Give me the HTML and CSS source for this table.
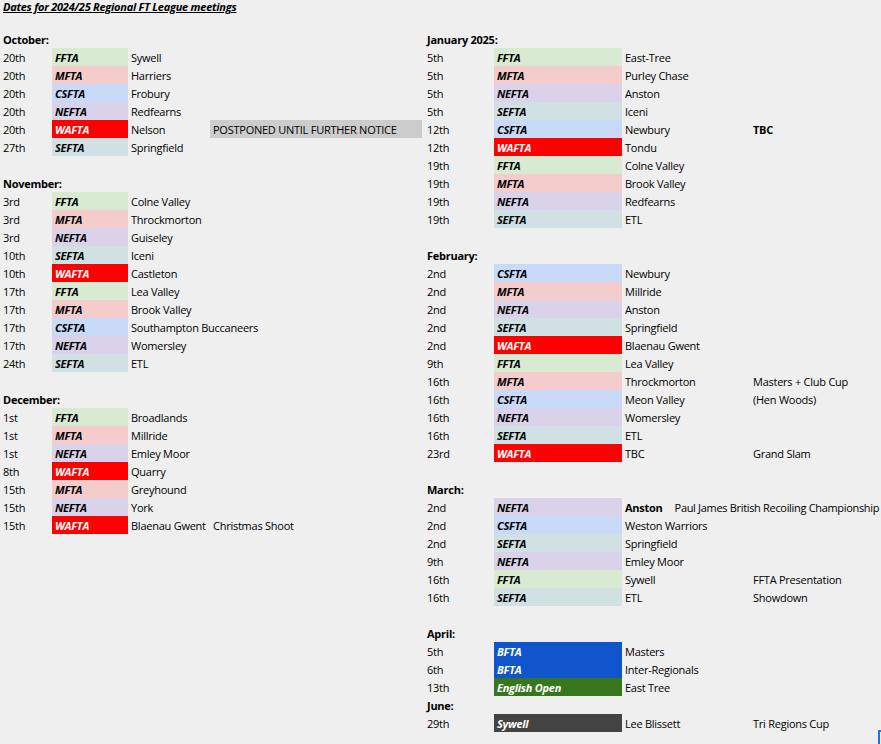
FILE: index.html
```html
<!DOCTYPE html>
<html>
<head>
<meta charset="utf-8">
<link rel="stylesheet" href="styles.css">
</head>
<body>
<div class="sheet">
  <div class="title"><span>Dates for 2024/25 Regional FT League meetings</span></div>
  <div class="col left">
    <div class="row blank"></div>
    <div class="row month">October:</div>
    <div class="row"><span class="d">20th</span><span class="t ffta">FFTA</span><span class="p">Sywell</span></div>
    <div class="row"><span class="d">20th</span><span class="t mfta">MFTA</span><span class="p">Harriers</span></div>
    <div class="row"><span class="d">20th</span><span class="t csfta">CSFTA</span><span class="p">Frobury</span></div>
    <div class="row"><span class="d">20th</span><span class="t nefta">NEFTA</span><span class="p">Redfearns</span></div>
    <div class="row"><span class="d">20th</span><span class="t wafta">WAFTA</span><span class="p">Nelson</span><span class="n postponed">POSTPONED UNTIL FURTHER NOTICE</span></div>
    <div class="row"><span class="d">27th</span><span class="t sefta">SEFTA</span><span class="p">Springfield</span></div>
    <div class="row blank"></div>
    <div class="row month">November:</div>
    <div class="row"><span class="d">3rd</span><span class="t ffta">FFTA</span><span class="p">Colne Valley</span></div>
    <div class="row"><span class="d">3rd</span><span class="t mfta">MFTA</span><span class="p">Throckmorton</span></div>
    <div class="row"><span class="d">3rd</span><span class="t nefta">NEFTA</span><span class="p">Guiseley</span></div>
    <div class="row"><span class="d">10th</span><span class="t sefta">SEFTA</span><span class="p">Iceni</span></div>
    <div class="row"><span class="d">10th</span><span class="t wafta">WAFTA</span><span class="p">Castleton</span></div>
    <div class="row"><span class="d">17th</span><span class="t ffta">FFTA</span><span class="p">Lea Valley</span></div>
    <div class="row"><span class="d">17th</span><span class="t mfta">MFTA</span><span class="p">Brook Valley</span></div>
    <div class="row"><span class="d">17th</span><span class="t csfta">CSFTA</span><span class="p">Southampton Buccaneers</span></div>
    <div class="row"><span class="d">17th</span><span class="t nefta">NEFTA</span><span class="p">Womersley</span></div>
    <div class="row"><span class="d">24th</span><span class="t sefta">SEFTA</span><span class="p">ETL</span></div>
    <div class="row blank"></div>
    <div class="row month">December:</div>
    <div class="row"><span class="d">1st</span><span class="t ffta">FFTA</span><span class="p">Broadlands</span></div>
    <div class="row"><span class="d">1st</span><span class="t mfta">MFTA</span><span class="p">Millride</span></div>
    <div class="row"><span class="d">1st</span><span class="t nefta">NEFTA</span><span class="p">Emley Moor</span></div>
    <div class="row"><span class="d">8th</span><span class="t wafta">WAFTA</span><span class="p">Quarry</span></div>
    <div class="row"><span class="d">15th</span><span class="t mfta">MFTA</span><span class="p">Greyhound</span></div>
    <div class="row"><span class="d">15th</span><span class="t nefta">NEFTA</span><span class="p">York</span></div>
    <div class="row"><span class="d">15th</span><span class="t wafta">WAFTA</span><span class="p">Blaenau Gwent</span><span class="n">Christmas Shoot</span></div>
  </div>
  <div class="col right">
    <div class="row blank"></div>
    <div class="row month">January 2025:</div>
    <div class="row"><span class="d">5th</span><span class="t ffta">FFTA</span><span class="p">East-Tree</span></div>
    <div class="row"><span class="d">5th</span><span class="t mfta">MFTA</span><span class="p">Purley Chase</span></div>
    <div class="row"><span class="d">5th</span><span class="t nefta">NEFTA</span><span class="p">Anston</span></div>
    <div class="row"><span class="d">5th</span><span class="t sefta">SEFTA</span><span class="p">Iceni</span></div>
    <div class="row"><span class="d">12th</span><span class="t csfta">CSFTA</span><span class="p">Newbury</span><span class="n bold">TBC</span></div>
    <div class="row"><span class="d">12th</span><span class="t wafta">WAFTA</span><span class="p">Tondu</span></div>
    <div class="row"><span class="d">19th</span><span class="t ffta">FFTA</span><span class="p">Colne Valley</span></div>
    <div class="row"><span class="d">19th</span><span class="t mfta">MFTA</span><span class="p">Brook Valley</span></div>
    <div class="row"><span class="d">19th</span><span class="t nefta">NEFTA</span><span class="p">Redfearns</span></div>
    <div class="row"><span class="d">19th</span><span class="t sefta">SEFTA</span><span class="p">ETL</span></div>
    <div class="row blank"></div>
    <div class="row month">February:</div>
    <div class="row"><span class="d">2nd</span><span class="t csfta">CSFTA</span><span class="p">Newbury</span></div>
    <div class="row"><span class="d">2nd</span><span class="t mfta">MFTA</span><span class="p">Millride</span></div>
    <div class="row"><span class="d">2nd</span><span class="t nefta">NEFTA</span><span class="p">Anston</span></div>
    <div class="row"><span class="d">2nd</span><span class="t sefta">SEFTA</span><span class="p">Springfield</span></div>
    <div class="row"><span class="d">2nd</span><span class="t wafta">WAFTA</span><span class="p">Blaenau Gwent</span></div>
    <div class="row"><span class="d">9th</span><span class="t ffta">FFTA</span><span class="p">Lea Valley</span></div>
    <div class="row"><span class="d">16th</span><span class="t mfta">MFTA</span><span class="p">Throckmorton</span><span class="n">Masters + Club Cup</span></div>
    <div class="row"><span class="d">16th</span><span class="t csfta">CSFTA</span><span class="p">Meon Valley</span><span class="n">(Hen Woods)</span></div>
    <div class="row"><span class="d">16th</span><span class="t nefta">NEFTA</span><span class="p">Womersley</span></div>
    <div class="row"><span class="d">16th</span><span class="t sefta">SEFTA</span><span class="p">ETL</span></div>
    <div class="row"><span class="d">23rd</span><span class="t wafta">WAFTA</span><span class="p">TBC</span><span class="n">Grand Slam</span></div>
    <div class="row blank"></div>
    <div class="row month">March:</div>
    <div class="row"><span class="d">2nd</span><span class="t nefta">NEFTA</span><span class="p wide"><b>Anston</b><span class="champ">Paul James British Recoiling Championship</span></span></div>
    <div class="row"><span class="d">2nd</span><span class="t csfta">CSFTA</span><span class="p">Weston Warriors</span></div>
    <div class="row"><span class="d">2nd</span><span class="t sefta">SEFTA</span><span class="p">Springfield</span></div>
    <div class="row"><span class="d">9th</span><span class="t nefta">NEFTA</span><span class="p">Emley Moor</span></div>
    <div class="row"><span class="d">16th</span><span class="t ffta">FFTA</span><span class="p">Sywell</span><span class="n">FFTA Presentation</span></div>
    <div class="row"><span class="d">16th</span><span class="t sefta">SEFTA</span><span class="p">ETL</span><span class="n">Showdown</span></div>
    <div class="row blank"></div>
    <div class="row month">April:</div>
    <div class="row"><span class="d">5th</span><span class="t bfta">BFTA</span><span class="p">Masters</span></div>
    <div class="row"><span class="d">6th</span><span class="t bfta">BFTA</span><span class="p">Inter-Regionals</span></div>
    <div class="row"><span class="d">13th</span><span class="t open">English Open</span><span class="p">East Tree</span></div>
    <div class="row month">June:</div>
    <div class="row"><span class="d">29th</span><span class="t dark">Sywell</span><span class="p">Lee Blissett</span><span class="n">Tri Regions Cup</span></div>
  </div>
</div>
<div class="selection"></div>
</body>
</html>
```

FILE: styles.css
```css
html, body {
  margin: 0;
  padding: 0;
  background: #efefef;
  overflow: hidden;
}
body {
  width: 881px;
  height: 744px;
  position: relative;
  font-family: "Open Sans", "Noto Sans", sans-serif;
  font-size: 11px;
  letter-spacing: -0.25px;
  color: #000;
}
.sheet {
  display: grid;
  grid-template-columns: 424px 1fr;
}
.title {
  grid-column: 1 / 3;
  height: 12px;
  line-height: 14px;
  padding-left: 3px;
  white-space: nowrap;
}
.title span {
  font-weight: bold;
  font-style: italic;
  text-decoration: underline;
}
.col {
  display: flex;
  flex-direction: column;
}
.row {
  height: 18px;
  line-height: 18px;
  display: grid;
  grid-template-rows: 18px;
  white-space: nowrap;
}
.left .row { grid-template-columns: 52px 76px 82px 212px; }
.right .row { grid-template-columns: 70px 128px 128px 1fr; }
.row > span {
  box-sizing: border-box;
  height: 18px;
  padding-left: 3px;
  padding-top: 1px;
  overflow: visible;
}
.month {
  font-weight: bold;
  padding-left: 3px;
  padding-top: 1px;
  box-sizing: border-box;
  display: block;
}
.t {
  font-weight: bold;
  font-style: italic;
}
.ffta { background: #d9ead3; }
.mfta { background: #f4cccc; }
.csfta { background: #c9daf8; }
.nefta { background: #d9d2e9; }
.sefta { background: #d0e0e3; }
.wafta { background: #ff0000; color: #fff; }
.bfta { background: #1155cc; color: #fff; }
.open { background: #38761d; color: #fff; }
.dark { background: #434343; color: #fff; }
.postponed { background: #cccccc; }
.bold { font-weight: bold; }
.wide { grid-column: 3 / 5; }
.champ {
  margin-left: 12px;
  letter-spacing: -0.32px;
}
.selection {
  position: absolute;
  left: 878px;
  top: 730px;
  width: 4px;
  height: 14px;
  border-left: 2px solid #1a73e8;
  border-top: 2px solid #1a73e8;
  box-sizing: border-box;
}
```
